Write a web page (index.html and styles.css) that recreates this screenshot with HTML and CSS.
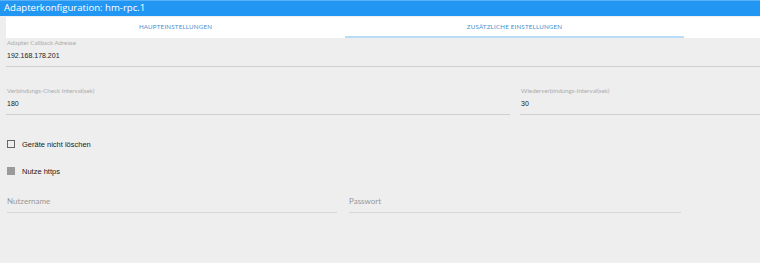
FILE: index.html
```html
<!DOCTYPE html>
<html lang="de">
<head>
<meta charset="utf-8">
<link rel="stylesheet" href="styles.css">
</head>
<body>
<div class="header">Adapterkonfiguration: hm-rpc.1</div>
<div class="tabs">
  <div class="tab">HAUPTEINSTELLUNGEN</div>
  <div class="tab active">ZUSÄTZLICHE EINSTELLUNGEN</div>
</div>
<div class="form">
  <div class="field full">
    <div class="label">Adapter Callback Adresse</div>
    <div class="value">192.168.178.201</div>
  </div>
  <div class="row two">
    <div class="field">
      <div class="label">Verbindungs-Check Interval(sek)</div>
      <div class="value">180</div>
    </div>
    <div class="field">
      <div class="label">Wiederverbindungs-Interval(sek)</div>
      <div class="value">30</div>
    </div>
  </div>
  <div class="check first"><span class="box"></span><span class="ctext">Geräte nicht löschen</span></div>
  <div class="check second"><span class="box filled"></span><span class="ctext">Nutze https</span></div>
  <div class="row login">
    <div class="pfield"><span class="placeholder">Nutzername</span></div>
    <div class="pfield"><span class="placeholder">Passwort</span></div>
  </div>
</div>
</body>
</html>
```
FILE: styles.css
```css
html, body {
  margin: 0;
  padding: 0;
  background: #eeeeee;
  font-family: Lato, "Open Sans", sans-serif;
}
.header {
  height: 16px;
  background: #2196f3;
  border-top: 1px solid #5ab0f5;
  box-sizing: border-box;
  color: #ffffff;
  font-family: "Open Sans", sans-serif;
  font-size: 9.6px;
  line-height: 14px;
  padding-left: 4px;
}
.tabs {
  margin: 1px 0 0 6px;
  height: 21px;
  background: #ffffff;
  display: flex;
}
.tab {
  width: 339px;
  box-sizing: border-box;
  text-align: center;
  font-size: 6.2px;
  letter-spacing: 0.2px;
  color: #4a8fd0;
  line-height: 19px;
}
.tab.active {
  border-bottom: 2px solid #b9dcf7;
}
.form {
  padding-left: 6px;
}
.field {
  border-bottom: 1px solid #cfcfcf;
  box-sizing: border-box;
}
.field.full {
  height: 28px;
  margin-top: 1px;
}
.label {
  font-size: 6.2px;
  color: #ababab;
  line-height: 8px;
  height: 12px;
  padding-left: 1px;
}
.value {
  font-family: "Liberation Sans", Arial, sans-serif;
  font-size: 7px;
  color: #222;
  line-height: 10px;
  padding-left: 1px;
}
.row.two {
  display: grid;
  grid-template-columns: 504px 1fr;
  column-gap: 10px;
  margin-top: 20px;
}
.row.two .field {
  height: 28px;
}
.check {
  display: flex;
  align-items: center;
  height: 10px;
  padding-left: 1px;
  font-family: "Liberation Sans", Arial, sans-serif;
  font-size: 7.5px;
  color: #222;
}
.check.first { margin-top: 24px; }
.check.second { margin-top: 17px; }
.box {
  width: 8px;
  height: 8px;
  border: 1px solid #666;
  box-sizing: border-box;
  margin-right: 7px;
}
.box.filled {
  background: #9a9a9a;
  border-color: #9a9a9a;
}
.row.login {
  display: flex;
  gap: 12px;
  margin-top: 20px;
  padding-left: 1px;
}
.pfield {
  width: 330px;
  height: 17px;
  border-bottom: 1px solid #d6d6d6;
  box-sizing: border-box;
  font-size: 8px;
  color: #999;
  line-height: 10px;
}
.pfield + .pfield {
  width: 332px;
}
```
